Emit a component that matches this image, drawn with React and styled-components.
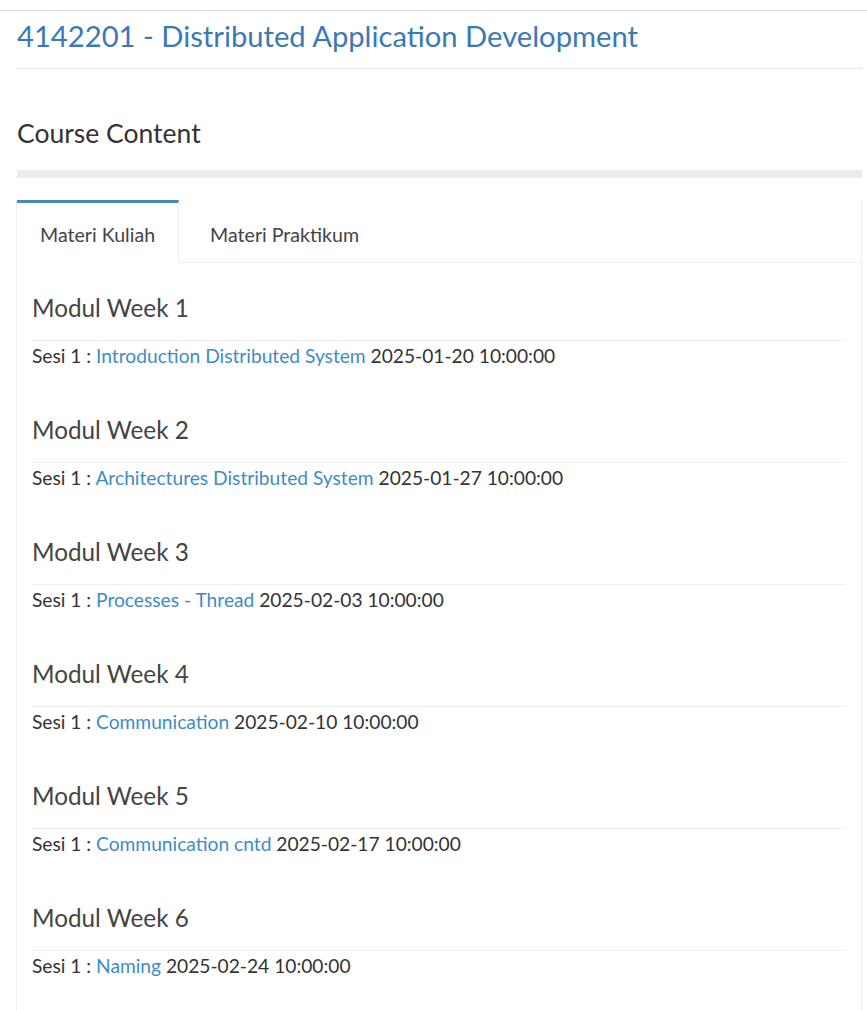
import React, { useState } from 'react';
import styled, { createGlobalStyle } from 'styled-components';

const GlobalStyle = createGlobalStyle`
  body {
    margin: 0;
    background: #fff;
    font-family: Lato, "Liberation Sans", sans-serif;
    color: #333;
  }
`;

const modules = [
  { week: 1, title: 'Introduction Distributed System', date: '2025-01-20 10:00:00' },
  { week: 2, title: 'Architectures Distributed System', date: '2025-01-27 10:00:00' },
  { week: 3, title: 'Processes - Thread', date: '2025-02-03 10:00:00' },
  { week: 4, title: 'Communication', date: '2025-02-10 10:00:00' },
  { week: 5, title: 'Communication cntd', date: '2025-02-17 10:00:00' },
  { week: 6, title: 'Naming', date: '2025-02-24 10:00:00' },
];

const App = () => {
  const [tab, setTab] = useState(0);

  return (
    <Page>
      <GlobalStyle />
      <Container>
        <TitleWrap>
          <Title>4142201 - Distributed Application Development</Title>
        </TitleWrap>
        <SectionTitle>Course Content</SectionTitle>
        <GreyBar />
        <TabBox>
          <TabList>
            <Tab active={tab === 0} onClick={() => setTab(0)}>Materi Kuliah</Tab>
            <Tab active={tab === 1} onClick={() => setTab(1)}>Materi Praktikum</Tab>
            <TabFill />
          </TabList>
          <TabBody>
            {modules.map((m) => (
              <Module key={m.week}>
                <ModuleTitle>Modul Week {m.week}</ModuleTitle>
                <Session>
                  Sesi 1 : <SessionLink href="#">{m.title}</SessionLink> {m.date}
                </Session>
              </Module>
            ))}
          </TabBody>
        </TabBox>
      </Container>
    </Page>
  );
};

export default App;

const Page = styled.div`
  padding-top: 10px;
`;

const Container = styled.div`
  border-top: 1px solid #dcdcdc;
  padding: 0 5px 0 17px;
`;

const TitleWrap = styled.div`
  border-bottom: 1px dotted #d8d8d8;
  padding: 6px 0 13px;
`;

const Title = styled.h1`
  margin: 0;
  font-size: 29.2px;
  line-height: 38px;
  font-weight: 400;
  color: #3a79b6;
`;

const SectionTitle = styled.h2`
  margin: 47px 0 0;
  font-size: 26.5px;
  line-height: 34px;
  font-weight: 400;
  color: #333;
`;

const GreyBar = styled.div`
  height: 8px;
  margin-top: 20px;
  background: #ececec;
`;

const TabBox = styled.div`
  margin-top: 22px;
  border-left: 1px solid #f0f0f0;
  border-right: 1px solid #f0f0f0;
  margin-left: -1px;
`;

const TabList = styled.div`
  display: flex;
  height: 63px;
`;

const Tab = styled.div`
  display: flex;
  align-items: center;
  padding: 3px 23px 0 ${(p) => (p.active ? '23px' : '31px')};
  font-size: 19.6px;
  color: #444;
  cursor: pointer;
  border-top: 3px solid ${(p) => (p.active ? '#4a87bf' : 'transparent')};
  border-right: ${(p) => (p.active ? '1px solid #f0f0f0' : 'none')};
  border-bottom: ${(p) => (p.active ? 'none' : '1px solid #f0f0f0')};
`;

const TabFill = styled.div`
  flex: 1;
  border-bottom: 1px solid #f0f0f0;
`;

const TabBody = styled.div`
  padding: 29px 15px 20px 15px;
`;

const Module = styled.div`
  margin-bottom: 45px;
`;

const ModuleTitle = styled.h3`
  margin: 0;
  padding-bottom: 16px;
  border-bottom: 1px solid #efefef;
  font-size: 24.3px;
  line-height: 32px;
  font-weight: 400;
  color: #444;
`;

const Session = styled.div`
  padding-top: 2px;
  font-size: 19.2px;
  line-height: 26px;
  color: #333;
`;

const SessionLink = styled.a`
  color: #3e8cc5;
  text-decoration: none;
`;
